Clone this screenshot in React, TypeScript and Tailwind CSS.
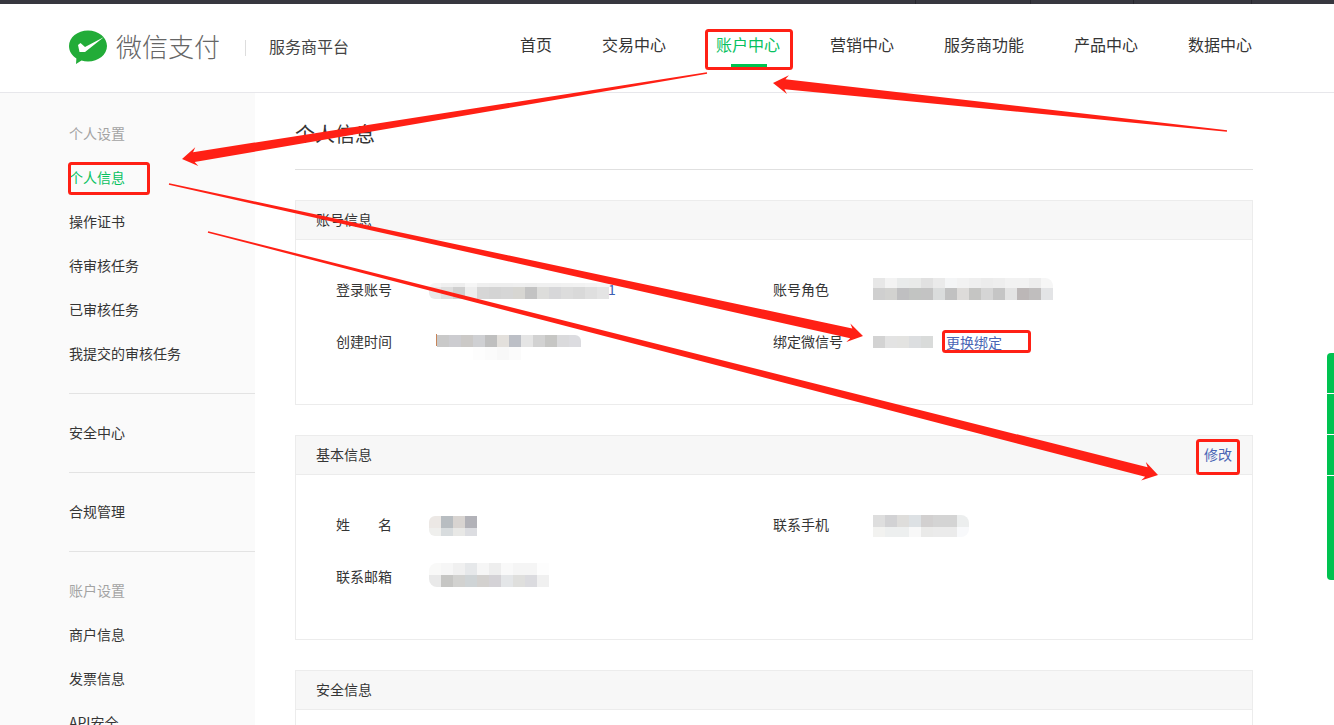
import React from "react";

const font = { fontFamily: '"Noto Sans CJK SC", "Liberation Sans", sans-serif' };

function Mosaic({ rows, cell = 12, rowH, className = "" }: { rows: string[][]; cell?: number; rowH: number[]; className?: string }) {
  return (
    <div className={"flex flex-col overflow-hidden " + className}>
      {rows.map((r, i) => (
        <div key={i} className="flex" style={{ height: rowH[i] }}>
          {r.map((c, j) => (
            <div key={j} style={{ width: cell, background: c }} />
          ))}
        </div>
      ))}
    </div>
  );
}

function Arrow({ from, to, w = 10, tail = 1.6, head = 15, barb = 9.5 }: { from: [number, number]; to: [number, number]; w?: number; tail?: number; head?: number; barb?: number }) {
  const dx = to[0] - from[0];
  const dy = to[1] - from[1];
  const len = Math.hypot(dx, dy);
  const ux = dx / len;
  const uy = dy / len;
  const nx = -uy;
  const ny = ux;
  const at = (d: number, o: number) => `${to[0] - ux * d + nx * o},${to[1] - uy * d + ny * o}`;
  const pts = [
    at(len, tail / 2),
    at(head * 0.8, w / 2),
    at(head, barb),
    `${to[0]},${to[1]}`,
    at(head, -barb),
    at(head * 0.8, -w / 2),
    at(len, -tail / 2),
  ].join(" ");
  return <polygon points={pts} fill="#ff2015" />;
}

function NavItem({ label, active }: { label: string; active?: boolean }) {
  return (
    <div className={"relative text-base leading-[24px] " + (active ? "text-[#07c160]" : "text-[#353535]")}>
      {label}
      {active && <div className="absolute left-[15px] top-[32px] h-[3px] w-[36px] bg-[#00c250]" />}
    </div>
  );
}

function SideItem({ label, kind }: { label: string; kind?: "head" | "active" }) {
  const color = kind === "head" ? "text-[#a3a3a3]" : kind === "active" ? "text-[#07c160]" : "text-[#353535]";
  return <div className={"flex h-[44px] items-center pb-[2px] text-sm " + color}>{label}</div>;
}

function SideGroup({ items, last }: { items: { label: string; kind?: "head" | "active" }[]; last?: boolean }) {
  return (
    <div className={"py-[17px] " + (last ? "" : "border-b border-[#e3e3e3]")}>
      {items.map((it) => (
        <SideItem key={it.label} {...it} />
      ))}
    </div>
  );
}

function Panel({ title, action, children }: { title: string; action?: string; children?: React.ReactNode }) {
  return (
    <section className="border border-[#ececec]">
      <div className="flex h-[39px] items-center justify-between border-b border-[#ececec] bg-[#f7f7f7] pb-[2px] pl-[20px] pr-[20px] text-sm text-[#353535]">
        <span>{title}</span>
        {action && <span className="text-[#4a66b5]">{action}</span>}
      </div>
      <div className="pb-[36px] pl-[40px] pt-[24px]">{children}</div>
    </section>
  );
}

function Row({ left, right }: { left: React.ReactNode; right: React.ReactNode }) {
  return (
    <div className="flex h-[52px] items-center text-sm text-[#353535]">
      <div className="flex w-[437px] items-center">{left}</div>
      <div className="flex items-center">{right}</div>
    </div>
  );
}

function Label({ children, w }: { children: React.ReactNode; w: string }) {
  return <span className={"mt-[-2px] flex " + w}>{children}</span>;
}

export default function App() {
  return (
    <div className="relative h-[725px] w-full overflow-hidden bg-white" style={font}>
      {/* top strip */}
      <div className="flex h-[4px] bg-[#37373f]">
        <div className="w-[916px] border-r border-[#27272d]" />
        <div className="w-[115px] border-r border-[#27272d]" />
        <div className="w-[103px] border-r border-[#27272d]" />
        <div className="w-[118px] border-r border-[#27272d]" />
      </div>

      {/* header */}
      <header className="flex h-[89px] items-center justify-between border-b border-[#e7e7eb] pl-[69px] pr-[82px]">
        <div className="flex items-center">
          <svg width="38" height="35" viewBox="69 31 38 35" className="mt-[-2px]">
            <path d="M88 31.500c10.500 0 19 7 19 15.500s-8.500 15.500-19 15.500c-2.300 0-4.500-.3-6.500-.9L76 65l.4-5.500C71.800 56.600 69 52 69 47c0-8.500 8.500-15.500 19-15.500z" fill="#22ac38" />
            <path d="M78 46 80.500 44 85 48 104 38 85 53 79.500 53z" fill="#ffffff" />
          </svg>
          <span className="ml-[9px] mt-[-4px] text-[26px] font-light leading-[36px] text-[#666666]">微信支付</span>
          <div className="ml-[25px] h-[16px] w-px bg-[#dddddd]" />
          <span className="ml-[23px] mt-[-4px] text-base text-[#444444]">服务商平台</span>
        </div>
        <nav className="mt-[-8px] flex items-center gap-[50px]">
          <NavItem label="首页" />
          <NavItem label="交易中心" />
          <NavItem label="账户中心" active />
          <NavItem label="营销中心" />
          <NavItem label="服务商功能" />
          <NavItem label="产品中心" />
          <NavItem label="数据中心" />
        </nav>
      </header>

      <div className="flex">
        {/* sidebar */}
        <aside className="h-[640px] w-[255px] shrink-0 bg-[#fafafa] pl-[69px] pt-[2px]">
          <SideGroup
            items={[
              { label: "个人设置", kind: "head" },
              { label: "个人信息", kind: "active" },
              { label: "操作证书" },
              { label: "待审核任务" },
              { label: "已审核任务" },
              { label: "我提交的审核任务" },
            ]}
          />
          <SideGroup items={[{ label: "安全中心" }]} />
          <SideGroup items={[{ label: "合规管理" }]} />
          <SideGroup
            last
            items={[
              { label: "账户设置", kind: "head" },
              { label: "商户信息" },
              { label: "发票信息" },
              { label: "API安全" },
            ]}
          />
        </aside>

        {/* main */}
        <main className="ml-[40px] w-[958px]">
          <div className="mb-[30px] flex h-[77px] items-center border-b border-[#e0e0e0] pt-[6px] text-xl text-[#353535]">个人信息</div>

          <div className="flex flex-col gap-[30px]">
            <Panel title="账号信息">
              <Row
                left={
                  <>
                    <Label w="w-[93px]">登录账号</Label>
                    <Mosaic
                      className="mt-[2px] rounded-l-[6px]"
                      rowH={[4, 12]}
                      rows={[
                        ["#f4f4f4", "#f0f0f0", "#eeeeee", "#f6f6f6", "#efefef", "#eeeeee", "#eeeeee", "#efefef", "#eeeeee", "#f0f0f0", "#f0f0f0", "#f1f1f1", "#f2f2f2", "#f4f4f4", "#f6f6f6"],
                        ["#e9e9e9", "#dedede", "#cfcfcf", "#eeeeee", "#d6d6d6", "#d4d4d4", "#d6d6d6", "#d7d6d2", "#c3c3c3", "#dddddb", "#d7d7d9", "#dcdcdc", "#d9d9d9", "#dfdfdf", "#e4e4e4"],
                      ]}
                    />
                    <span className="ml-[-1px] mt-[-3px] text-sm leading-none text-[#3d5fb3]">1</span>
                  </>
                }
                right={
                  <>
                    <Label w="w-[100px]">账号角色</Label>
                    <Mosaic
                      className="mt-[-3px] rounded-tr-[8px]"
                      rowH={[10, 12]}
                      rows={[
                        ["#e7e7e7", "#f3f3f3", "#e9ebeb", "#e9eae9", "#e1e1e1", "#eaeaea", "#f4f5f6", "#f2f2f2", "#efefef", "#ececec", "#eeeeee", "#f2f2f2", "#f2f2f2", "#ededed", "#f6f6f6"],
                        ["#cfcfcf", "#d2d2d0", "#bfbfc1", "#c2c4c2", "#c3c3c3", "#dadcdc", "#c1c1c1", "#dddbd9", "#c5c5c3", "#d5d5d5", "#c5c5c5", "#e3e3e3", "#bcb7b7", "#c0bebe", "#e3e4e6"],
                      ]}
                    />
                  </>
                }
              />
              <Row
                left={
                  <>
                    <Label w="w-[100px]">创建时间</Label>
                    <div className="mt-[10px] h-[12px] w-[1px] shrink-0 self-start bg-[#c8855a]" />
                    <Mosaic
                      className="mt-[11px] rounded-r-[6px]"
                      rowH={[12, 13]}
                      rows={[
                        ["#c9c9c9", "#ccccd0", "#cbc9c7", "#cfd0d3", "#bfbfbf", "#e3e0dc", "#bcbfc6", "#e5e5e5", "#d2d2d2", "#c6c6c4", "#dadadc", "#dcdce0"],
                        ["#ffffff", "#ffffff", "#ffffff", "#fdfdfd", "#fbfbfb", "#f8f8f8", "#fbfbfb", "#ffffff", "#ffffff", "#ffffff", "#ffffff", "#ffffff"],
                      ]}
                    />
                  </>
                }
                right={
                  <>
                    <Label w="w-[100px]">绑定微信号</Label>
                    <Mosaic
                      className="mt-[-1px]"
                      rowH={[12]}
                      rows={[["#d3d3d3", "#e3e3e3", "#e3e3e1", "#dcdee0", "#d9dbda"]]}
                    />
                    <span className="ml-[13px] mt-[-1px] text-[#4a66b5]">更换绑定</span>
                  </>
                }
              />
            </Panel>

            <Panel title="基本信息" action="修改">
              <Row
                left={
                  <>
                    <Label w="w-[93px]"><span>姓</span><span className="ml-[28px]">名</span></Label>
                    <Mosaic
                      className="mt-[2px] rounded-l-[6px]"
                      rowH={[12, 8]}
                      rows={[
                        ["#ece8e5", "#b8bdc1", "#d8d4d1", "#b2b2b8"],
                        ["#efefed", "#d8dcde", "#e8e8e6", "#dcdde1"],
                      ]}
                    />
                  </>
                }
                right={
                  <>
                    <Label w="w-[100px]">联系手机</Label>
                    <Mosaic
                      className="mt-[2px] rounded-r-[8px]"
                      rowH={[12, 10]}
                      rows={[
                        ["#dedede", "#d2d2d4", "#dedddb", "#dde1e4", "#d2d0d0", "#d4d4d4", "#d4d4d4", "#eceeee"],
                        ["#f2f2f0", "#edefef", "#edefef", "#f8f8f8", "#eaeae9", "#ebebeb", "#ebebeb", "#f8f9fb"],
                      ]}
                    />
                  </>
                }
              />
              <Row
                left={
                  <>
                    <Label w="w-[93px]">联系邮箱</Label>
                    <Mosaic
                      className="mt-[-4px] rounded-l-[8px]"
                      rowH={[12, 12]}
                      rows={[
                        ["#f9f9f8", "#f6f6f6", "#f0f0f0", "#e6e8ea", "#f6f6f6", "#eeeeee", "#f9f9f9", "#f5f5f5", "#f5f5f5", "#fdfdfd"],
                        ["#e9e9e9", "#c6c6c4", "#d2d2d0", "#cfd4d6", "#d3d1cf", "#d4d2d6", "#e4e6e8", "#dfdfdd", "#dbdbdf", "#f0f0f0"],
                      ]}
                    />
                  </>
                }
                right={null}
              />
            </Panel>

            <Panel title="安全信息" />
          </div>
        </main>
      </div>

      {/* side tabs */}
      <div className="absolute left-[1327px] top-[353px] flex h-[227px] w-[7px] flex-col gap-px overflow-hidden rounded-l-[4px]">
        <div className="h-[40px] bg-[#00c250]" />
        <div className="h-[40px] bg-[#00c250]" />
        <div className="h-[40px] bg-[#00c250]" />
        <div className="flex-1 bg-[#00c250]" />
      </div>

      {/* annotations */}
      <svg className="pointer-events-none absolute left-0 top-0" width="1334" height="725" viewBox="0 0 1334 725">
        <g fill="none" stroke="#ff2015" strokeWidth="3">
          <rect x="706.500" y="30.500" width="85" height="38" rx="2" />
          <rect x="69.500" y="163.500" width="79" height="30" rx="2" />
          <rect x="943.500" y="331.500" width="86" height="20" rx="2" />
          <rect x="1197.500" y="440.500" width="41" height="33" rx="2" />
        </g>
        <Arrow from={[707, 73]} to={[182, 159]} />
        <Arrow from={[1227, 131]} to={[773, 83]} />
        <Arrow from={[169, 184]} to={[863, 336]} />
        <Arrow from={[208, 232]} to={[1158, 475]} />
      </svg>
    </div>
  );
}
